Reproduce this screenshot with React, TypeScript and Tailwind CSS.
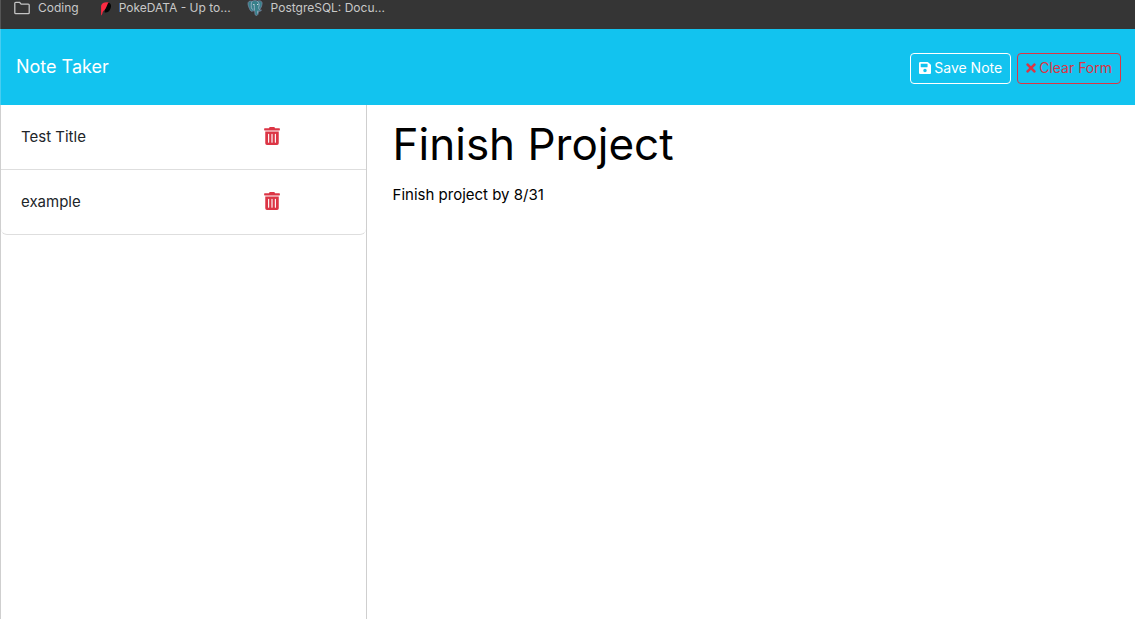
import { useState } from "react";
import type { ReactNode } from "react";
import { FaSave, FaTimes, FaTrashAlt } from "react-icons/fa";

function FolderIcon() {
  return (
    <svg className="h-4 w-4 shrink-0" viewBox="0 0 16 16" fill="none" stroke="#c4c4c4" strokeWidth="1.3" strokeLinejoin="round" aria-hidden="true">
      <path d="M.8 3.3a1 1 0 0 1 1-1h3.7l1.6 1.8h7.1a1 1 0 0 1 1 1v7.6a1 1 0 0 1-1 1H1.8a1 1 0 0 1-1-1z" />
    </svg>
  );
}

function PokeIcon() {
  return (
    <svg className="h-4 w-4 shrink-0" viewBox="-2.500 0 16 16" aria-hidden="true">
      <path d="M9 2.2C13 2 14.400 5 13 8.500C12 11.500 9.500 13 7 12.300z" fill="#050505" />
      <path d="M3.600 15.500V6.500C3.700 3.500 6 2 11.300 2.200C9.800 3.600 9.600 6 8.300 8.300C7.300 10.400 5.300 11 5 12.800C4.900 14 4.400 14.800 3.600 15.500z" fill="#fb2b42" />
    </svg>
  );
}

function ElephantIcon() {
  return (
    <svg className="h-4 w-4 shrink-0" viewBox="0 0 16 16" aria-hidden="true">
      <path d="M1 4C.8 1.300 3 .6 5 1.300C7 .3 9 .4 10.300 1.100C13 .2 15.600 1.100 15 4.200C14.700 6.500 13.500 8.600 12.600 9.800L14.500 10.200C13.600 11.300 12.300 11.500 11.300 11.200L10.900 14.500C10.200 15.900 8.200 15.700 8 14.200L7.700 10.800L5.900 10.900C4.500 12 3.300 10.800 2.500 8.700C1.700 6.900 1.100 5.500 1 4z" fill="#37808a" stroke="#7e87a5" strokeWidth=".7" />
      <path d="M5.200 1.500C3.800 3 4.400 5 4.300 7.200C4.300 8.700 5.200 9.500 6.200 9.200M7.400 10.500C7 8.500 7.800 7.300 7.300 5.200M10.300 1.300C12.300 3 12.500 5 11.700 7.300C11.500 8.500 12.200 9.200 12.600 9.800M10.800 10.700L10.700 13.500" fill="none" stroke="#a3b8ce" strokeWidth=".8" />
      <path d="M6.100 4.600h1.400M10 4.500h1.200" stroke="#e2e8ed" strokeWidth=".9" />
    </svg>
  );
}

function Bookmark({ icon, label }: { icon: ReactNode; label: string }) {
  return (
    <a href="#" className="flex items-center gap-2 whitespace-nowrap">
      {icon}
      <span>{label}</span>
    </a>
  );
}

const button = "flex h-[31px] items-center gap-[3px] rounded border px-2 text-sm";

export default function App() {
  const [notes, setNotes] = useState(["Test Title", "example"]);
  const [title, setTitle] = useState("Finish Project");
  const [text, setText] = useState("Finish project by 8/31");

  const save = () => {
    if (title) setNotes([...notes, title]);
  };
  const clear = () => {
    setTitle("");
    setText("");
  };

  return (
    <div className="flex min-h-screen flex-col bg-white font-['Inter','Liberation_Sans',sans-serif] text-[15px] text-[#212529]">
      <nav aria-label="Bookmarks" className="flex h-[29px] items-start gap-4 overflow-hidden border-l border-[#555] bg-[#353535] pl-[13px] text-xs leading-4 text-[#c8c8c8]">
        <Bookmark icon={<FolderIcon />} label="Coding" />
        <Bookmark icon={<PokeIcon />} label="PokeDATA - Up to..." />
        <Bookmark icon={<ElephantIcon />} label="PostgreSQL: Docu..." />
      </nav>
      <header className="flex h-[76px] items-center justify-between border-l border-[#48cdf0] bg-[#12c3ef] pr-3.5 pl-[15px]">
        <a href="#" className="text-lg leading-[30px] text-white">Note Taker</a>
        <div className="flex gap-1.5 pt-0.5">
          <button type="button" onClick={save} className={`${button} border-white text-white`}>
            <FaSave className="h-3.5 w-3" />
            Save Note
          </button>
          <button type="button" onClick={clear} className={`${button} border-[#dc3545] text-[#dc3545]`}>
            <FaTimes className="h-3.5 w-2.5" />
            Clear Form
          </button>
        </div>
      </header>
      <div className="flex flex-1">
        <aside className="w-[32.3%] shrink-0 border-x border-[#cfcfcf]">
          <ul className="overflow-hidden rounded-b-md border-b border-[#dedede]">
            {notes.map((note, i) => (
              <li key={i} className="flex h-[65px] items-center border-b border-[#dedede] px-5 last:h-16 last:border-b-0">
                <button type="button" className="w-3/4 text-left">{note}</button>
                <button type="button" aria-label={`Delete ${note}`} onClick={() => setNotes(notes.filter((_, n) => n !== i))} className="pb-0.5 text-[#dc3545]">
                  <FaTrashAlt className="h-[18px] w-4" />
                </button>
              </li>
            ))}
          </ul>
        </aside>
        <main className="flex min-w-0 flex-1 flex-col px-6 pt-3.5">
          <input aria-label="Note title" placeholder="Note Title" value={title} onChange={(e) => setTitle(e.target.value)} className="h-[50px] w-full px-0.5 text-[44px] leading-[50px] text-black outline-none" />
          <textarea aria-label="Note text" placeholder="Note Text" value={text} onChange={(e) => setText(e.target.value)} className="mt-3.5 w-full flex-1 resize-none px-0.5 leading-6 text-black outline-none" />
        </main>
      </div>
    </div>
  );
}
